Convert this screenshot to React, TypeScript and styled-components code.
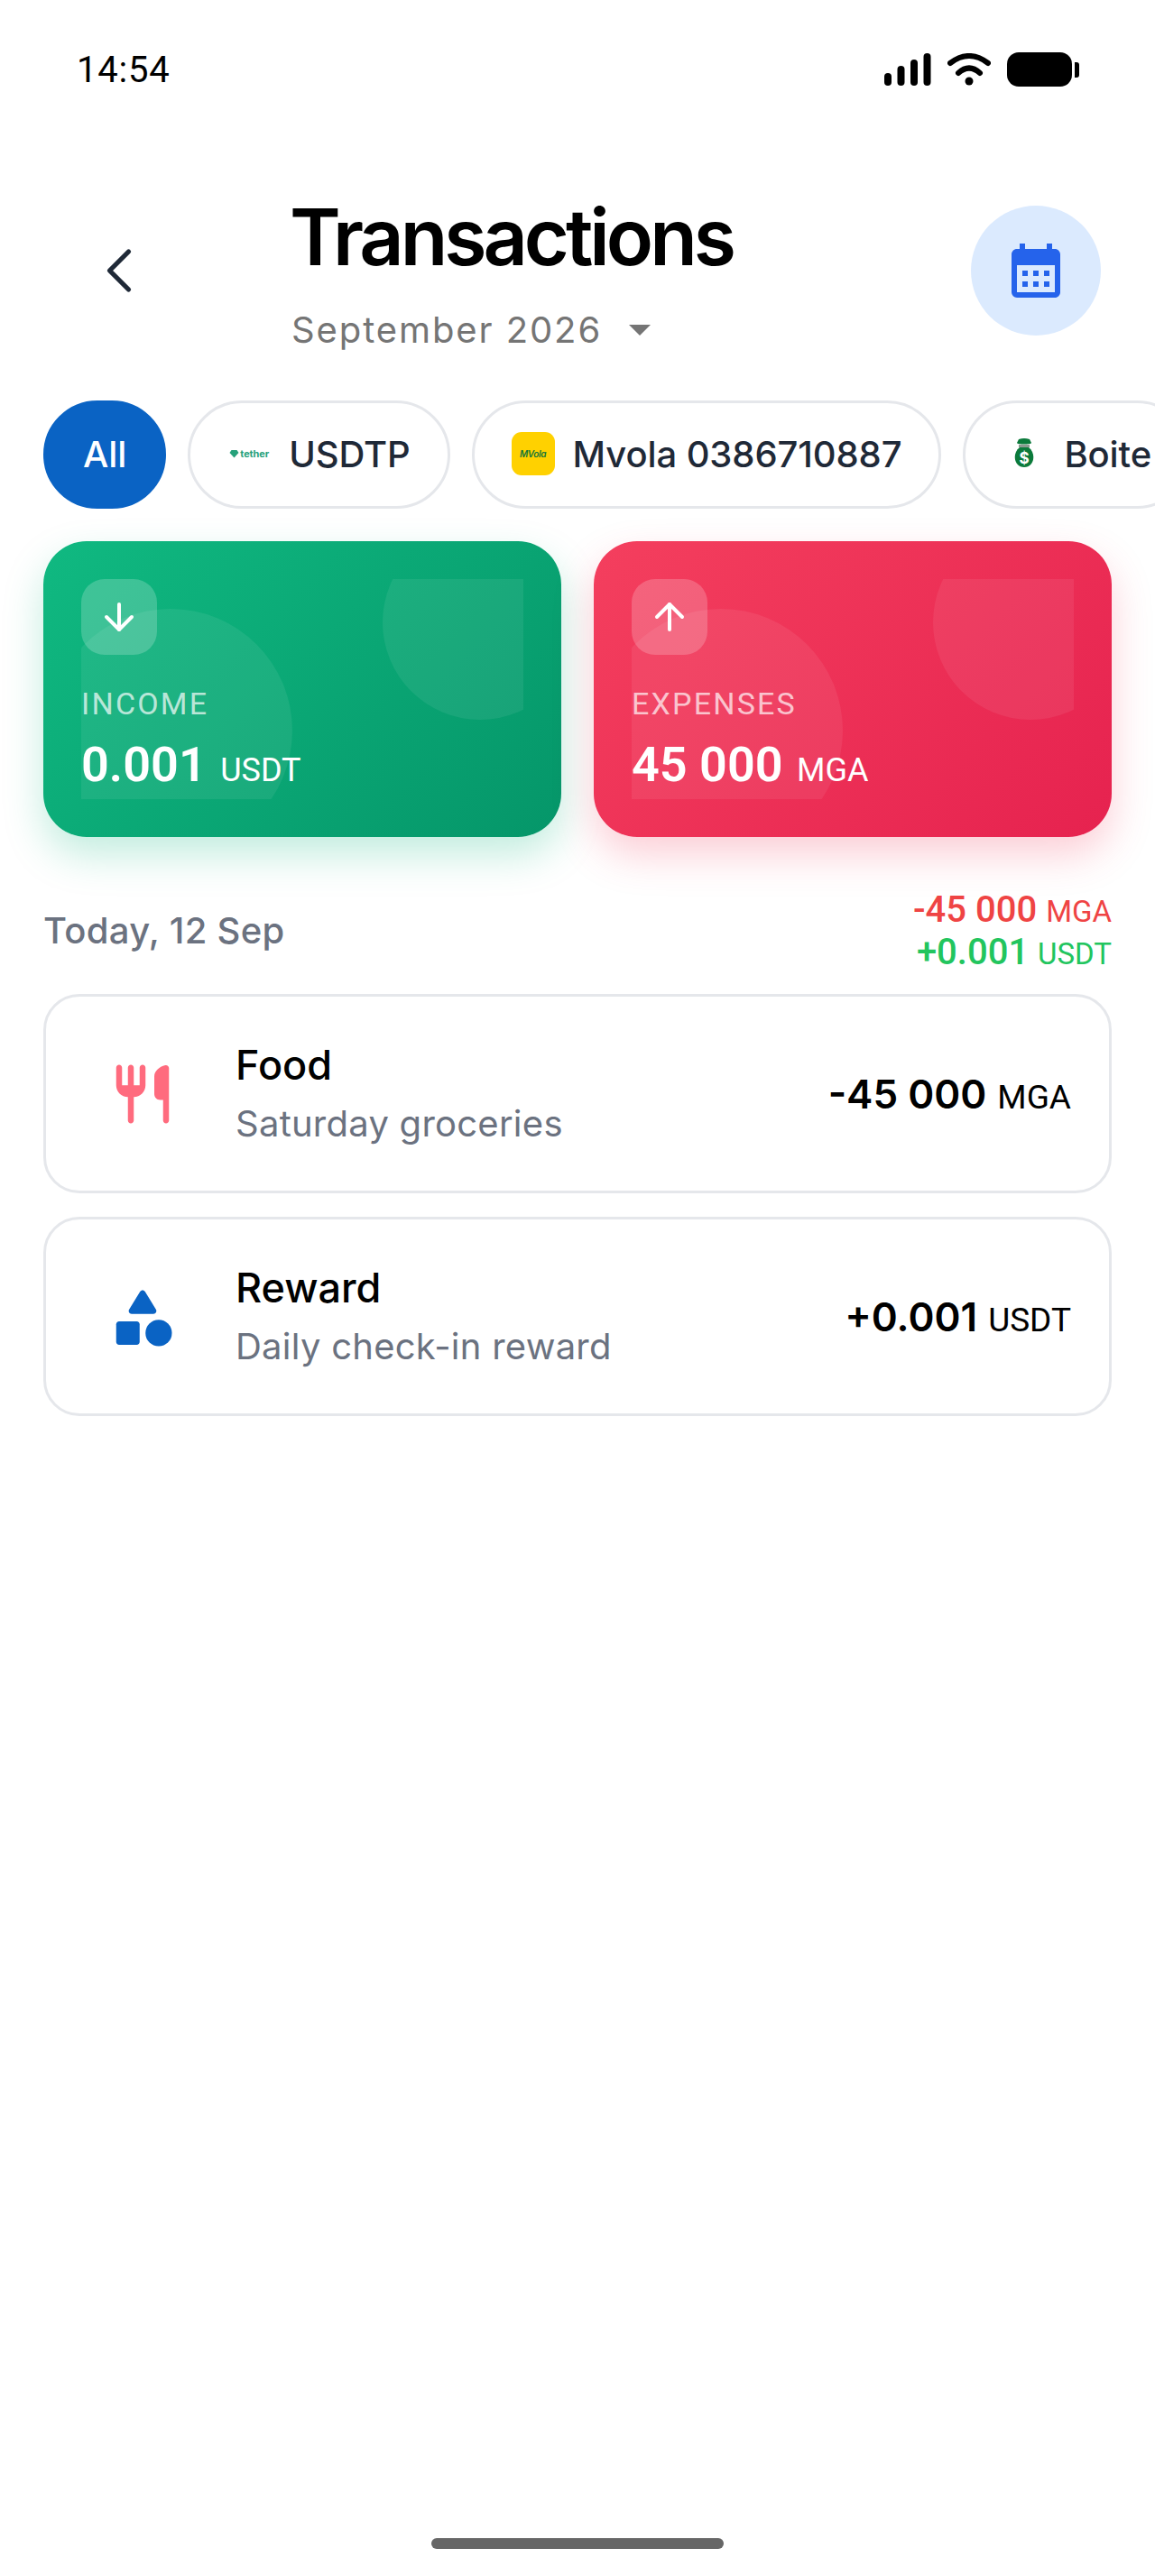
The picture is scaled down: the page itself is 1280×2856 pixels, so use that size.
import React from "react";
import styled, { createGlobalStyle } from "styled-components";
import { ArrowDown, ArrowUp, ChevronLeft } from "lucide-react";

const INK = "#1f2937";
const MUTED = "#6b7280";
const BLUE = "#0a63c4";

const GlobalStyle = createGlobalStyle`
  html, body {
    margin: 0;
    padding: 0;
    background: #ffffff;
  }
  * {
    box-sizing: border-box;
  }
`;

const Screen = styled.div`
  width: 1280px;
  height: 2856px;
  display: flex;
  flex-direction: column;
  overflow: hidden;
  background: #ffffff;
  font-family: Inter, "Noto Sans", sans-serif;
  color: #000000;
`;

const StatusBar = styled.div`
  height: 154px;
  padding: 0 92px 0 85px;
  display: flex;
  align-items: center;
  justify-content: space-between;
  flex-shrink: 0;
`;

const Clock = styled.span`
  font-family: Roboto, sans-serif;
  font-size: 40px;
  font-weight: 400;
  letter-spacing: 0.8px;
`;

const StatusIcons = styled.div`
  display: flex;
  align-items: center;
  gap: 18px;
`;

const Battery = styled.div`
  width: 72px;
  height: 38px;
  border-radius: 13px;
  background: #000000;
  position: relative;
  &::after {
    content: "";
    position: absolute;
    left: 75px;
    top: 11px;
    width: 5px;
    height: 17px;
    border-radius: 0 3px 3px 0;
    background: #000000;
  }
`;

const Header = styled.header`
  height: 164px;
  margin-top: 64px;
  padding: 0 60px 0 90px;
  display: flex;
  align-items: center;
  flex-shrink: 0;
`;

const BackButton = styled.div`
  width: 84px;
  height: 84px;
  color: ${INK};
  flex-shrink: 0;
  svg {
    display: block;
  }
`;

const TitleBlock = styled.div`
  flex: 1;
  margin-left: 149px;
  margin-top: 9px;
`;

const Title = styled.h1`
  margin: 0 0 0 -2px;
  font-size: 86px;
  line-height: 96px;
  font-weight: 600;
  letter-spacing: -4px;
`;

const Period = styled.div`
  margin-top: 27px;
  display: flex;
  align-items: center;
  gap: 30px;
  font-size: 40px;
  line-height: 56px;
  letter-spacing: 1.9px;
  color: #757575;
`;

const Caret = styled.span`
  width: 0;
  height: 0;
  border-left: 12px solid transparent;
  border-right: 12px solid transparent;
  border-top: 12px solid #757575;
`;

const CalendarButton = styled.div`
  width: 144px;
  height: 144px;
  border-radius: 50%;
  background: #dbeafe;
  display: flex;
  align-items: center;
  justify-content: center;
  flex-shrink: 0;
`;

const ChipRow = styled.div`
  margin-top: 62px;
  padding-left: 48px;
  display: flex;
  gap: 24px;
  flex-shrink: 0;
`;

const Chip = styled.div<{ $active?: boolean }>`
  height: 120px;
  padding: 0 41px 2px;
  border-radius: 60px;
  border: 3px solid ${(p) => (p.$active ? BLUE : "#e5e7eb")};
  background: ${(p) => (p.$active ? BLUE : "#ffffff")};
  color: ${(p) => (p.$active ? "#ffffff" : INK)};
  display: flex;
  align-items: center;
  gap: 20px;
  font-size: 40px;
  font-weight: 450;
  letter-spacing: -0.1px;
  white-space: nowrap;
  flex-shrink: 0;
`;

const ChipLogo = styled.div`
  width: 48px;
  height: 48px;
  display: flex;
  align-items: center;
  justify-content: center;
  flex-shrink: 0;
`;

const TetherMark = styled.div`
  display: flex;
  align-items: center;
  gap: 1px;
  font-size: 11px;
  line-height: 12px;
  font-weight: 700;
  color: #26a17b;
`;

const MvolaMark = styled(ChipLogo)`
  background: #ffd100;
  border-radius: 11px;
  font-size: 10px;
  font-style: italic;
  font-weight: 600;
  letter-spacing: -0.3px;
  color: #11753a;
`;

const SummaryRow = styled.div`
  margin-top: 36px;
  padding: 0 48px;
  display: grid;
  grid-template-columns: 1fr 1fr;
  gap: 36px;
  flex-shrink: 0;
`;

const SummaryCard = styled.div<{ $from: string; $to: string; $glow: string }>`
  height: 328px;
  padding: 42px;
  border-radius: 48px;
  background: linear-gradient(135deg, ${(p) => p.$from}, ${(p) => p.$to});
  box-shadow: 0 20px 44px ${(p) => p.$glow};
  color: #ffffff;
`;

const CardInner = styled.div`
  position: relative;
  height: 100%;
  overflow: hidden;
`;

const Blob = styled.div<{ $size: number; $left: number; $top: number }>`
  position: absolute;
  width: ${(p) => p.$size}px;
  height: ${(p) => p.$size}px;
  left: ${(p) => p.$left}px;
  top: ${(p) => p.$top}px;
  border-radius: 50%;
  background: rgba(255, 255, 255, 0.07);
`;

const CardContent = styled.div`
  position: relative;
`;

const ArrowBadge = styled.div`
  width: 84px;
  height: 84px;
  border-radius: 26px;
  background: rgba(255, 255, 255, 0.2);
  display: flex;
  align-items: center;
  justify-content: center;
`;

const CardLabel = styled.div`
  margin-top: 32px;
  font-family: Roboto, sans-serif;
  font-size: 34px;
  line-height: 44px;
  letter-spacing: 2.2px;
  color: rgba(255, 255, 255, 0.7);
`;

const CardAmount = styled.div`
  margin-top: 15px;
  font-family: Roboto, sans-serif;
  font-size: 54px;
  line-height: 62px;
  font-weight: 600;
`;

const CardUnit = styled.span`
  margin-left: 2px;
  font-size: 36px;
  font-weight: 400;
`;

const DayRow = styled.div`
  margin-top: 58px;
  padding: 0 48px;
  display: flex;
  align-items: center;
  justify-content: space-between;
  flex-shrink: 0;
`;

const DayLabel = styled.div`
  font-size: 40px;
  font-weight: 500;
  letter-spacing: 0.3px;
  color: ${MUTED};
  margin-top: -4px;
`;

const DayTotals = styled.div`
  display: flex;
  flex-direction: column;
  align-items: flex-end;
  font-family: Roboto, sans-serif;
  font-size: 40px;
  line-height: 45px;
  font-weight: 500;
`;

const DayTotal = styled.div<{ $color: string }>`
  color: ${(p) => p.$color};
`;

const DayUnit = styled.span`
  font-size: 33px;
  font-weight: 400;
`;

const TxList = styled.div`
  margin-top: 22px;
  padding: 0 48px;
  display: flex;
  flex-direction: column;
  gap: 26px;
  flex-shrink: 0;
`;

const TxCard = styled.div`
  height: 221px;
  padding: 0 42px 0 68px;
  border: 3px solid #e5e7eb;
  border-radius: 40px;
  display: flex;
  align-items: center;
`;

const TxIcon = styled.div`
  width: 78px;
  height: 78px;
  flex-shrink: 0;
  svg {
    display: block;
  }
`;

const TxText = styled.div`
  flex: 1;
  margin-left: 64px;
`;

const TxTitle = styled.div`
  font-size: 45px;
  line-height: 56px;
  font-weight: 500;
  margin-top: -2px;
`;

const TxNote = styled.div`
  margin-top: 12px;
  font-size: 40px;
  line-height: 50px;
  letter-spacing: 0.25px;
  color: ${MUTED};
`;

const TxAmount = styled.div`
  font-size: 44px;
  font-weight: 600;
  white-space: nowrap;
`;

const TxUnit = styled.span`
  margin-left: 1px;
  font-family: Roboto, sans-serif;
  font-size: 37px;
  font-weight: 450;
`;

const HomeBar = styled.div`
  margin: auto auto 30px;
  width: 324px;
  height: 12px;
  border-radius: 6px;
  background: #666666;
  flex-shrink: 0;
`;

const SignalIcon = () => (
  <svg width="52" height="36" viewBox="0 0 52 36">
    <rect x="0" y="22" width="8" height="14" rx="4" />
    <rect x="14.5" y="14" width="8" height="22" rx="4" />
    <rect x="29" y="7" width="8" height="29" rx="4" />
    <rect x="43.5" y="0" width="8" height="36" rx="4" />
  </svg>
);

const WifiIcon = () => (
  <svg width="48" height="36" viewBox="0 0 48 36">
    <path d="M3 11 Q24 -5 45 11" fill="none" stroke="#000" strokeWidth="6" strokeLinecap="round" />
    <path d="M12 22 Q24 11 36 22" fill="none" stroke="#000" strokeWidth="6" strokeLinecap="round" />
    <circle cx="24" cy="31" r="4.5" />
  </svg>
);

const CalendarIcon = () => (
  <svg width="72" height="72" viewBox="0 0 24 24" fill="#2563eb">
    <path d="M19 4h-1V2h-2v2H8V2H6v2H5c-1.11 0-1.99.9-1.99 2L3 20a2 2 0 0 0 2 2h14c1.1 0 2-.9 2-2V6c0-1.1-.9-2-2-2zm0 16H5V10h14v10zM9 14H7v-2h2v2zm4 0h-2v-2h2v2zm4 0h-2v-2h2v2zm-8 4H7v-2h2v2zm4 0h-2v-2h2v2zm4 0h-2v-2h2v2z" />
  </svg>
);

const MoneyBag = () => (
  <svg width="48" height="48" viewBox="0 0 48 48">
    <path d="M18 8 L16 12 C16 14 32 14 32 12 L30 8 Q24 6 18 8z" fill="#0b7a3b" />
    <rect x="18" y="14" width="12" height="3" fill="#8a9a90" />
    <path d="M19 17 C10 24 13 39 24 39 C35 39 38 24 29 17z" fill="#0b7a3b" />
    <text x="24" y="35" textAnchor="middle" fontSize="17" fontWeight="700" fill="#ffffff" fontFamily="Inter, sans-serif">$</text>
  </svg>
);

const RestaurantIcon = () => (
  <svg width="78" height="78" viewBox="0 0 24 24" fill="#ff6b7e">
    <path d="M16 6v6c0 1.1.9 2 2 2h1v7c0 .55.45 1 1 1s1-.45 1-1V3.13c0-.65-.61-1.13-1.24-.98C17.6 2.68 16 4.16 16 6zm-5 3H9V3c0-.55-.45-1-1-1s-1 .45-1 1v6H5V3c0-.55-.45-1-1-1s-1 .45-1 1v6c0 2.21 1.79 4 4 4v8c0 .55.45 1 1 1s1-.45 1-1v-8c2.21 0 4-1.79 4-4V3c0-.55-.45-1-1-1s-1 .45-1 1v6z" />
  </svg>
);

const CategoryIcon = () => (
  <svg width="78" height="78" viewBox="0 0 24 24" fill={BLUE}>
    <path d="M11.15 3.4L7.43 9.48c-.41.66.07 1.52.85 1.52h7.43c.78 0 1.26-.86.85-1.52L12.85 3.4c-.39-.64-1.31-.64-1.7 0z" />
    <circle cx="17.5" cy="17.5" r="4.5" />
    <path d="M4 21.5h6c.55 0 1-.45 1-1v-6c0-.55-.45-1-1-1H4c-.55 0-1 .45-1 1v6c0 .55.45 1 1 1z" />
  </svg>
);

const App = () => (
  <Screen>
    <GlobalStyle />
    <StatusBar>
      <Clock>14:54</Clock>
      <StatusIcons>
        <SignalIcon />
        <WifiIcon />
        <Battery />
      </StatusIcons>
    </StatusBar>

    <Header>
      <BackButton>
        <ChevronLeft size={84} strokeWidth={1.5} />
      </BackButton>
      <TitleBlock>
        <Title>Transactions</Title>
        <Period>
          September 2026
          <Caret />
        </Period>
      </TitleBlock>
      <CalendarButton>
        <CalendarIcon />
      </CalendarButton>
    </Header>

    <ChipRow>
      <Chip $active>All</Chip>
      <Chip>
        <ChipLogo>
          <TetherMark>
            <svg width="11" height="10" viewBox="0 0 10 10">
              <path d="M2 1h6l2 3-5 5.500-5-5.500z" fill="#26a17b" />
            </svg>
            tether
          </TetherMark>
        </ChipLogo>
        USDTP
      </Chip>
      <Chip>
        <MvolaMark>MVola</MvolaMark>
        Mvola 0386710887
      </Chip>
      <Chip>
        <ChipLogo>
          <MoneyBag />
        </ChipLogo>
        Boite
      </Chip>
    </ChipRow>

    <SummaryRow>
      <SummaryCard $from="#10b981" $to="#059669" $glow="rgba(16, 185, 129, 0.25)">
        <CardInner>
          <Blob $size={270} $left={-36} $top={33} />
          <Blob $size={216} $left={334} $top={-60} />
          <CardContent>
            <ArrowBadge>
              <ArrowDown size={48} strokeWidth={2} />
            </ArrowBadge>
            <CardLabel>INCOME</CardLabel>
            <CardAmount>
              0.001 <CardUnit>USDT</CardUnit>
            </CardAmount>
          </CardContent>
        </CardInner>
      </SummaryCard>
      <SummaryCard $from="#f43f5e" $to="#e6224f" $glow="rgba(244, 63, 94, 0.25)">
        <CardInner>
          <Blob $size={270} $left={-36} $top={33} />
          <Blob $size={216} $left={334} $top={-60} />
          <CardContent>
            <ArrowBadge>
              <ArrowUp size={48} strokeWidth={2} />
            </ArrowBadge>
            <CardLabel>EXPENSES</CardLabel>
            <CardAmount>
              45 000 <CardUnit>MGA</CardUnit>
            </CardAmount>
          </CardContent>
        </CardInner>
      </SummaryCard>
    </SummaryRow>

    <DayRow>
      <DayLabel>Today, 12 Sep</DayLabel>
      <DayTotals>
        <DayTotal $color="#ef4444">
          -45 000 <DayUnit>MGA</DayUnit>
        </DayTotal>
        <DayTotal $color="#22c55e">
          +0.001 <DayUnit>USDT</DayUnit>
        </DayTotal>
      </DayTotals>
    </DayRow>

    <TxList>
      <TxCard>
        <TxIcon>
          <RestaurantIcon />
        </TxIcon>
        <TxText>
          <TxTitle>Food</TxTitle>
          <TxNote>Saturday groceries</TxNote>
        </TxText>
        <TxAmount>
          -45 000 <TxUnit>MGA</TxUnit>
        </TxAmount>
      </TxCard>
      <TxCard>
        <TxIcon>
          <CategoryIcon />
        </TxIcon>
        <TxText>
          <TxTitle>Reward</TxTitle>
          <TxNote>Daily check-in reward</TxNote>
        </TxText>
        <TxAmount>
          +0.001 <TxUnit>USDT</TxUnit>
        </TxAmount>
      </TxCard>
    </TxList>

    <HomeBar />
  </Screen>
);

export default App;
